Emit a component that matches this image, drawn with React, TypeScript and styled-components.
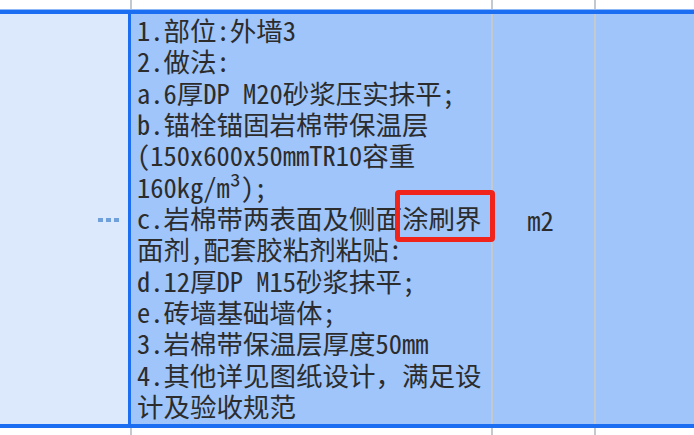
import React from "react";
import styled, { createGlobalStyle } from "styled-components";

const GlobalStyle = createGlobalStyle`
  html, body {
    margin: 0;
    padding: 0;
    background: #ffffff;
  }
  body {
    width: 694px;
    height: 435px;
    overflow: hidden;
    font-family: "Noto Sans Mono CJK SC", "Noto Sans CJK SC", "Liberation Mono", monospace;
  }
`;

const BLUE = "#1b6df1";
const CELL_BG = "#9fc5fa";
const GRID_GREY = "#c4c8cf";

const Sheet = styled.div`
  display: flex;
  flex-direction: column;
  width: 694px;
  height: 435px;
  background: #ffffff;
`;

const Stub = styled.div<{ $h: number; $top?: boolean }>`
  height: ${(p) => p.$h}px;
  display: grid;
  grid-template-columns: 130px 361px 103px 1fr;
  border-bottom: ${(p) => (p.$top ? "1px solid #8dbaf6" : "none")};
`;

const StubCell = styled.div<{ $line?: boolean }>`
  border-left: ${(p) => (p.$line ? `2px solid ${GRID_GREY}` : "none")};
`;

const Row = styled.div`
  display: grid;
  grid-template-columns: 128px 363px 103px 1fr;
  height: 411px;
  border-top: 4px solid ${BLUE};
  border-bottom: 4px solid ${BLUE};
`;

const IndexCell = styled.div`
  background: #dce9fc;
  display: flex;
  align-items: center;
  justify-content: flex-end;
  padding-right: 9px;
  padding-top: 1px;
`;

const Dots = styled.div`
  display: flex;
  gap: 3px;
`;

const Dot = styled.span`
  width: 5px;
  height: 4px;
  background: #6fa0d9;
`;

const DescCell = styled.div`
  position: relative;
  background: ${CELL_BG};
  border-left: 3px solid ${BLUE};
  padding: 0 0 0 6px;
  color: #2c2c2c;
  font-size: 26.5px;
  line-height: 31.33px;
  white-space: pre;
`;

const Line = styled.div`
  height: 31.33px;
`;

const Highlight = styled.div`
  position: absolute;
  left: 264px;
  top: 176px;
  width: 100px;
  height: 52px;
  box-sizing: border-box;
  border: 5px solid #f1241b;
  border-radius: 4px;
`;

const UnitCell = styled.div`
  background: ${CELL_BG};
  border-left: 2px solid ${GRID_GREY};
  display: flex;
  align-items: center;
  justify-content: center;
  padding-right: 6px;
  color: #2c2c2c;
  font-size: 26.5px;
`;

const BlankCell = styled.div`
  background: ${CELL_BG};
  border-left: 2px solid ${GRID_GREY};
`;

const lines = [
  "1.部位:外墙3",
  "2.做法:",
  "a.6厚DP M20砂浆压实抹平;",
  "b.锚栓锚固岩棉带保温层",
  "(150x600x50mmTR10容重",
  "160kg/m³);",
  "c.岩棉带两表面及侧面涂刷界",
  "面剂,配套胶粘剂粘贴:",
  "d.12厚DP M15砂浆抹平;",
  "e.砖墙基础墙体;",
  "3.岩棉带保温层厚度50mm",
  "4.其他详见图纸设计，满足设",
  "计及验收规范",
];

export default function App() {
  return (
    <>
      <GlobalStyle />
      <Sheet>
        <Stub $h={9} $top>
          <StubCell />
          <StubCell $line />
          <StubCell $line />
          <StubCell $line />
        </Stub>
        <Row>
          <IndexCell>
            <Dots>
              <Dot />
              <Dot />
              <Dot />
            </Dots>
          </IndexCell>
          <DescCell>
            {lines.map((l, i) => (
              <Line key={i}>{l}</Line>
            ))}
            <Highlight />
          </DescCell>
          <UnitCell>m2</UnitCell>
          <BlankCell />
        </Row>
        <Stub $h={7}>
          <StubCell />
          <StubCell $line />
          <StubCell $line />
          <StubCell $line />
        </Stub>
      </Sheet>
    </>
  );
}
